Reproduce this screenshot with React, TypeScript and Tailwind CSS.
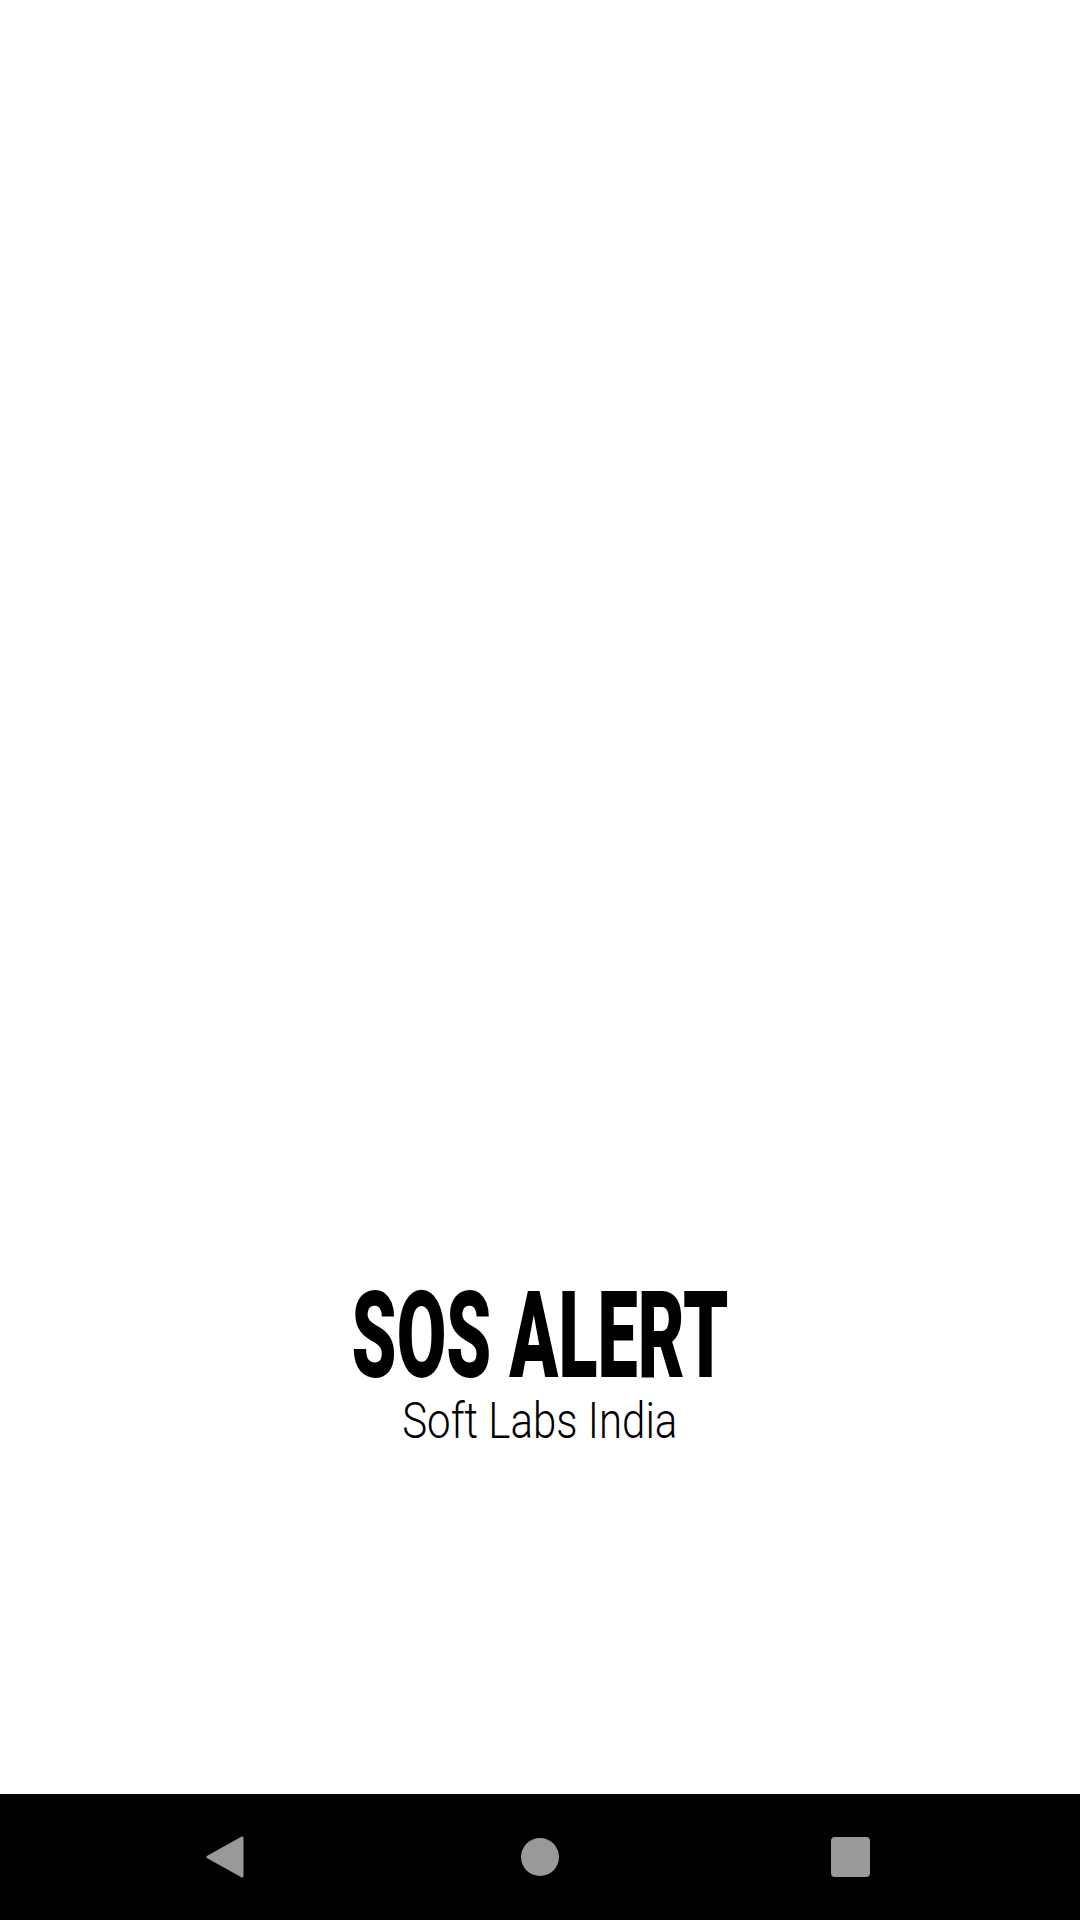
import React from "react";

export default function App() {
  return (
    <div className="w-[1080px] h-[1920px] flex flex-col bg-white overflow-hidden">
      <div className="h-[1794px] flex flex-col items-center pt-[1276px]">
        <div
          className="text-[120px] leading-none font-black text-black scale-x-[0.6] whitespace-nowrap"
          style={{ fontFamily: "Roboto, sans-serif" }}
        >
          SOS ALERT
        </div>
        <div
          className="text-[50px] leading-none font-light text-black scale-x-[0.84] whitespace-nowrap"
          style={{ fontFamily: "Roboto, sans-serif" }}
        >
          Soft Labs India
        </div>
      </div>
      <div className="h-[126px] bg-black flex items-center">
        <div className="ml-[195px] w-[60px] h-[60px] flex items-center justify-center">
          <svg width="38" height="44" viewBox="0 0 38 44">
            <polygon
              points="36,3 36,41 2,22"
              fill="#999999"
              stroke="#999999"
              strokeWidth="3"
              strokeLinejoin="round"
            />
          </svg>
        </div>
        <div className="ml-[255px] w-[60px] h-[60px] flex items-center justify-center">
          <div className="w-[38px] h-[38px] rounded-full bg-[#999999]" />
        </div>
        <div className="ml-[250px] w-[60px] h-[60px] flex items-center justify-center">
          <div className="w-[39px] h-[40px] rounded-[4px] bg-[#999999]" />
        </div>
      </div>
    </div>
  );
}
